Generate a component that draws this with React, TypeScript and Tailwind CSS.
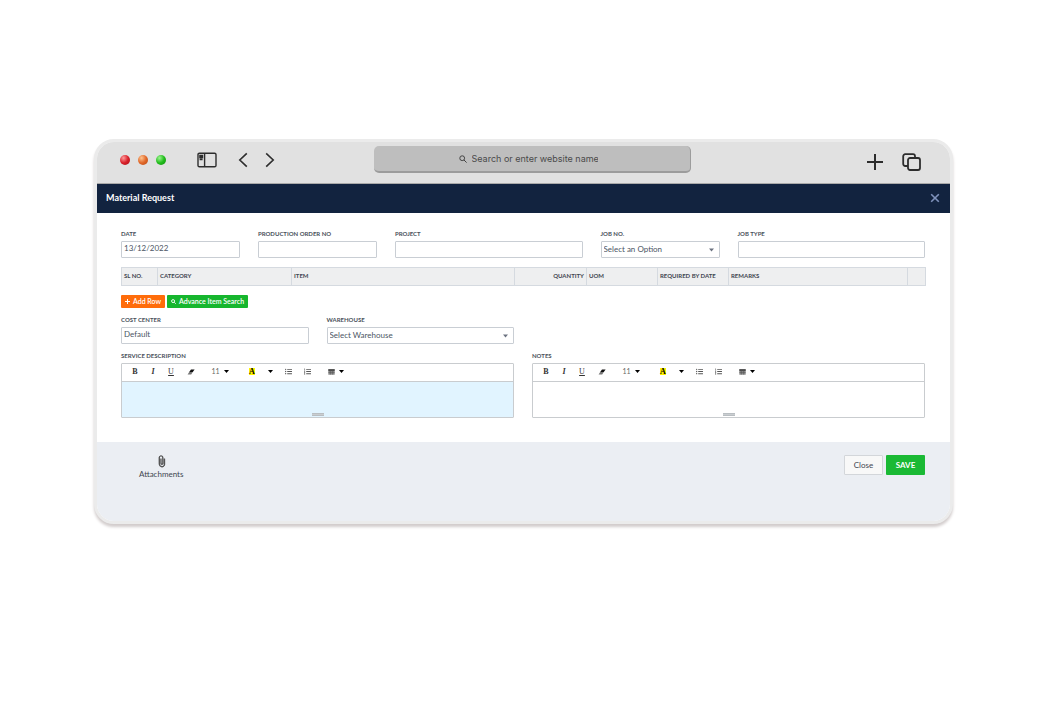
import type { ReactNode } from "react";
import { FaListOl, FaListUl, FaPaperclip } from "react-icons/fa";

const controlClass =
  "block h-[17px] w-full appearance-none rounded-[1px] border border-[#c9ced4] bg-white px-[2px] text-[8px] leading-[13px] text-[#4b5563] outline-none";

const labelClass = "block text-[6px] leading-[8px] font-bold text-[#4a515b] uppercase";

type FieldProps = {
  id: string;
  label: string;
  span: string;
  children: ReactNode;
};

function Field({ id, label, span, children }: FieldProps) {
  return (
    <div className={span}>
      <label htmlFor={id} className={`${labelClass} mb-[3px]`}>
        {label}
      </label>
      {children}
    </div>
  );
}

function TextBox({ id, value }: { id: string; value?: string }) {
  return <input id={id} defaultValue={value} className={`${controlClass} pb-[3px]`} />;
}

function Caret({ className }: { className: string }) {
  return (
    <svg viewBox="0 0 10 6" className={className} fill="currentColor" aria-hidden="true">
      <path d="M0 0h10L5 6z" />
    </svg>
  );
}

function SelectBox({ id, placeholder }: { id: string; placeholder: string }) {
  return (
    <div className="relative">
      <select id={id} className={controlClass}>
        <option>{placeholder}</option>
      </select>
      <Caret className="pointer-events-none absolute top-[7px] right-[6px] h-1 w-[5px] text-[#6b7280]" />
    </div>
  );
}

function ToolButton({ label, width, children }: { label: string; width: string; children: ReactNode }) {
  return (
    <button
      type="button"
      aria-label={label}
      className={`flex h-full items-center justify-center gap-1 text-[8px] text-[#333] ${width}`}
    >
      {children}
    </button>
  );
}

function Editor({ id, label, active = false }: { id: string; label: string; active?: boolean }) {
  return (
    <div className="col-span-6">
      <label htmlFor={id} className={`${labelClass} mb-[3px]`}>
        {label}
      </label>
      <div className="rounded-[1px] border border-[#c9cccf] bg-white">
        <div className="flex h-[18px] items-center border-b border-[#c9cccf] pb-[2px] pl-1 font-['Liberation_Serif',serif]">
          <ToolButton label="Bold" width="w-[18px]">
            <span className="font-bold">B</span>
          </ToolButton>
          <ToolButton label="Italic" width="w-[18px]">
            <span className="font-bold italic">I</span>
          </ToolButton>
          <ToolButton label="Underline" width="w-[18px]">
            <span className="underline">U</span>
          </ToolButton>
          <ToolButton label="Clear formatting" width="w-[22px]">
            <svg viewBox="0 0 8 6" className="h-[6px] w-2" aria-hidden="true">
              <path d="M4 .4h3.6L5.8 3H2.2z" fill="#111" />
              <path d="M2.2 3h3.6L4.2 5.4H.6z" fill="#777" />
            </svg>
          </ToolButton>
          <ToolButton label="Font size" width="w-[36px]">
            <span className="font-['Lato',sans-serif] text-[7px] text-[#666]">11</span>
            <Caret className="h-[3px] w-[5px] text-black" />
          </ToolButton>
          <div className="w-[5px]" />
          <ToolButton label="Highlight colour" width="w-[18px]">
            <span className="w-[6px] bg-[#fff200] text-center leading-[7px] font-bold text-black">A</span>
          </ToolButton>
          <ToolButton label="More colours" width="w-[18px]">
            <Caret className="h-[3px] w-[5px] text-black" />
          </ToolButton>
          <ToolButton label="Bulleted list" width="w-[18px]">
            <FaListUl className="size-[7px] text-[#555]" />
          </ToolButton>
          <ToolButton label="Numbered list" width="w-[20px]">
            <FaListOl className="size-[7px] text-[#555]" />
          </ToolButton>
          <ToolButton label="Table" width="w-[38px]">
            <svg viewBox="0 0 7 6" className="h-[6px] w-[7px]" aria-hidden="true">
              <rect x=".3" y=".3" width="6.4" height="5.4" fill="#888" />
              <path d="M.3 1h6.4" stroke="#222" strokeWidth="1.2" />
              <path d="M.3 3.4h6.4M2.4 1.6v4M4.6 1.6v4" stroke="#555" strokeWidth=".5" />
            </svg>
            <Caret className="h-[3px] w-[5px] text-black" />
          </ToolButton>
        </div>
        <div className={active ? "bg-[#e1f4ff]" : "bg-white"}>
          <textarea
            id={id}
            className="block h-[31px] w-full resize-none bg-transparent px-1 text-[8px] outline-none"
          />
          <div className="mx-auto h-1 w-3">
            <div className="h-[3px] border-y border-[#b9bec2] bg-[#c9cdd0]" />
          </div>
        </div>
      </div>
    </div>
  );
}

const columns = [
  { name: "SL NO.", width: "w-[36px]" },
  { name: "CATEGORY", width: "w-[134px]" },
  { name: "ITEM", width: "w-[223px]" },
  { name: "QUANTITY", width: "w-[72px]", right: true },
  { name: "UOM", width: "w-[71px]" },
  { name: "REQUIRED BY DATE", width: "w-[71px]" },
  { name: "REMARKS", width: "w-[179px]" },
  { name: "", width: "w-[18px]" },
];

function BrowserBar() {
  return (
    <header className="grid h-[42px] grid-cols-[277fr_317fr_259fr] border-b border-[#a9a9a9] bg-[#e1e1e1] text-[#2d2d2d]">
      <div className="flex h-9 items-center pl-[23px]">
        <div className="flex gap-2">
          <span className="size-[10px] rounded-full bg-radial-[at_35%_30%] from-[#ff9a9a] via-[#d8202a] to-[#a80f18]" />
          <span className="size-[10px] rounded-full bg-radial-[at_35%_30%] from-[#ffc48f] via-[#e0682a] to-[#b9480f]" />
          <span className="size-[10px] rounded-full bg-radial-[at_35%_30%] from-[#9cf590] via-[#23bd1d] to-[#0d8d0b]" />
        </div>
        <button type="button" aria-label="Sidebar" className="ml-[31px]">
          <svg viewBox="0 0 20 16" className="h-4 w-5" fill="none" stroke="currentColor" strokeWidth="1.4">
            <rect x="1" y="1.2" width="18" height="13.6" rx="1.4" />
            <path d="M7.6 1.2v13.6" />
            <path d="M2.2 3.6h4M2.2 5.4h4M2.6 7.4h3" strokeWidth="1.8" />
          </svg>
        </button>
        <button type="button" aria-label="Back" className="ml-[21px]">
          <svg viewBox="0 0 10 16" className="h-4 w-[10px]" fill="none" stroke="currentColor" strokeWidth="1.6">
            <path d="M8.8 1.4 1.8 8l7 6.6" />
          </svg>
        </button>
        <button type="button" aria-label="Forward" className="ml-[17px]">
          <svg viewBox="0 0 10 16" className="h-4 w-[10px]" fill="none" stroke="currentColor" strokeWidth="1.6">
            <path d="m1.2 1.4 7 6.6-7 6.6" />
          </svg>
        </button>
      </div>
      <label className="mt-1 flex h-[27px] items-center justify-center gap-[5px] rounded-[5px] border-r border-b-2 border-[#9c9c9c] bg-[#bebebe] pr-2">
        <svg viewBox="0 0 8 8" className="size-2" fill="none" stroke="#444" strokeWidth="1">
          <circle cx="3.2" cy="3.2" r="2.4" />
          <path d="m5 5 2.6 2.6" />
        </svg>
        <input
          type="text"
          aria-label="Address"
          placeholder="Search or enter website name"
          className="w-[126px] bg-transparent font-['Inter',sans-serif] text-[9px] leading-[12px] outline-none placeholder:text-[#4a4a4a]"
        />
      </label>
      <div className="flex h-[39px] items-center justify-end gap-[18px] pr-[29px]">
        <button type="button" aria-label="New tab">
          <svg viewBox="0 0 18 18" className="size-[18px]" fill="none" stroke="currentColor" strokeWidth="2">
            <path d="M9 1v16M1 9h16" />
          </svg>
        </button>
        <button type="button" aria-label="Show tabs">
          <svg viewBox="0 0 19 18" className="h-[18px] w-[19px]" fill="none" stroke="currentColor" strokeWidth="1.8">
            <rect x="6" y="5" width="12" height="12" rx="2" />
            <path d="M6 13H3.2A2 2 0 0 1 1.2 11V3.2a2 2 0 0 1 2-2H11a2 2 0 0 1 2 2V5" />
          </svg>
        </button>
      </div>
    </header>
  );
}

export default function App() {
  return (
    <div className="min-h-screen bg-white pt-[139px] pr-[97px] pb-10 pl-[94px] font-['Lato',sans-serif]">
      <div className="overflow-hidden rounded-[20px] border-[3px] border-[#ebebeb] bg-white shadow-[0_3px_3px_#d2cccc]">
        <BrowserBar />

        <div className="flex h-[29px] items-center justify-between bg-[#12233f] pr-[10px] pb-[2px] pl-[9px]">
          <h1 className="text-[9px] leading-[12px] font-bold text-white">Material Request</h1>
          <button type="button" aria-label="Close dialog">
            <svg viewBox="0 0 10 10" className="size-[10px]" fill="none" stroke="#7f92bb" strokeWidth="1.6">
              <path d="m1.2 1.2 7.6 7.6M8.8 1.2 1.2 8.8" />
            </svg>
          </button>
        </div>

        <form className="pt-[17px] pr-[25px] pb-6 pl-6" onSubmit={(e) => e.preventDefault()}>
          <div className="grid grid-cols-12 gap-x-[18px]">
            <Field id="date" label="Date" span="col-span-2">
              <TextBox id="date" value="13/12/2022" />
            </Field>
            <Field id="order" label="Production Order No" span="col-span-2">
              <TextBox id="order" />
            </Field>
            <Field id="project" label="Project" span="col-span-3">
              <TextBox id="project" />
            </Field>
            <Field id="job-no" label="Job No." span="col-span-2">
              <SelectBox id="job-no" placeholder="Select an Option" />
            </Field>
            <Field id="job-type" label="Job Type" span="col-span-3">
              <TextBox id="job-type" />
            </Field>
          </div>

          <table className="mt-[9px] w-full table-fixed border-collapse bg-[#eeeff0]">
            <thead>
              <tr>
                {columns.map((column) => (
                  <th
                    key={column.name}
                    className={`h-[18px] border border-[#d5dae0] px-[2px] pb-[2px] text-[6px] leading-[8px] font-bold whitespace-nowrap text-[#3f4650] ${column.width} ${column.right ? "text-right" : "text-left"}`}
                  >
                    {column.name}
                  </th>
                ))}
              </tr>
            </thead>
          </table>

          <div className="mt-[9px] flex gap-[2px] text-[7px] leading-[13px] font-semibold text-white">
            <button type="button" className="flex items-center gap-[3px] rounded-[1px] bg-[#ff6c0a] px-1">
              <svg viewBox="0 0 5 5" className="size-[5px]" stroke="currentColor" strokeWidth="1">
                <path d="M2.5 0v5M0 2.5h5" />
              </svg>
              Add Row
            </button>
            <button type="button" className="flex items-center gap-[3px] rounded-[1px] bg-[#16b62e] px-1">
              <svg viewBox="0 0 6 6" className="size-[5px]" fill="none" stroke="currentColor" strokeWidth="1.1">
                <circle cx="2.5" cy="2.5" r="1.8" />
                <path d="m3.9 3.9 1.8 1.8" />
              </svg>
              Advance Item Search
            </button>
          </div>

          <div className="mt-2 grid grid-cols-12 gap-x-[18px] gap-y-2">
            <Field id="cost-center" label="Cost Center" span="col-span-3">
              <TextBox id="cost-center" value="Default" />
            </Field>
            <Field id="warehouse" label="Warehouse" span="col-span-3">
              <SelectBox id="warehouse" placeholder="Select Warehouse" />
            </Field>
            <div className="col-span-6" />
            <Editor id="description" label="Service Description" active />
            <Editor id="notes" label="Notes" />
          </div>
        </form>

        <footer className="flex items-start justify-between bg-[#ebeef3] pt-[13px] pr-[25px] pb-[42px] pl-[42px] text-[8px] leading-[10px] text-[#3f4650]">
          <button type="button" className="flex flex-col items-center gap-[2px] pt-px">
            <FaPaperclip className="size-[11px] -rotate-45 text-[#555]" />
            Attachments
          </button>
          <div className="flex gap-[3px]">
            <button type="button" className="h-5 w-[39px] rounded-[1px] border border-[#d3d6da] bg-[#f8f8f8]">
              Close
            </button>
            <button type="button" className="h-5 w-[39px] rounded-[1px] bg-[#1ab934] font-bold text-white">
              SAVE
            </button>
          </div>
        </footer>
      </div>
    </div>
  );
}
